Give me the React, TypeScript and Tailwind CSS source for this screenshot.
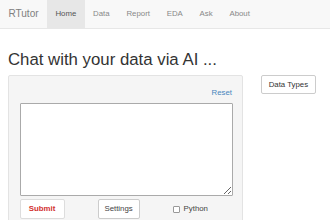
const tabs = ["Home", "Data", "Report", "EDA", "Ask", "About"];

export default function App() {
  return (
    <div className="w-[330px] h-[220px] overflow-hidden bg-white text-[#333] font-['Liberation_Sans',Arial,sans-serif]">
      {/* Navbar */}
      <nav className="flex h-[29px] bg-[#f8f8f8] border-b border-[#e7e7e7]">
        <div className="px-[8.4px] text-[10.08px] leading-[28px] text-[#808080]">RTutor</div>
        <ul className="flex">
          {tabs.map((t, i) => (
            <li
              key={t}
              className={`px-[8.4px] text-[7.84px] leading-[28px] ${
                i === 0 ? "bg-[#e7e7e7] text-[#555]" : "text-[#888]"
              }`}
            >
              {t}
            </li>
          ))}
        </ul>
      </nav>

      <div className="px-[8px]">
        <h2 className="mt-[22.4px] mb-[5.6px] text-[16.8px] leading-[18.5px] text-[#333]">
          Chat with your data via AI ...
        </h2>

        <div className="flex items-start">
          {/* Chat panel */}
          <div className="w-[235px] h-[200px] bg-[#f5f5f5] border border-[#e3e3e3] rounded-[2px] pl-[10.6px] pr-[9px] pt-[10.6px]">
            <div className="text-right text-[7.84px] leading-[11.2px] text-[#4a86bd] pr-[1px]">Reset</div>
            <textarea className="block mt-[5px] w-full h-[93px] bg-white border border-[#aaa] rounded-[1px] resize-y" />
            <div className="flex items-center mt-[3px]">
              <button className="h-[20px] w-[45px] bg-white border border-[#ddd] rounded-[2px] text-[7.84px] font-bold text-[#d2312f]">
                Submit
              </button>
              <button className="ml-[33px] h-[20px] w-[42px] bg-white border border-[#ccc] rounded-[2px] text-[7.84px] text-[#444]">
                Settings
              </button>
              <label className="ml-[33px] flex items-center gap-[4px] text-[7.84px] text-[#444]">
                <span className="w-[7px] h-[7px] border border-[#999] rounded-[1px] bg-white" />
                Python
              </label>
            </div>
          </div>

          {/* Right column */}
          <button className="ml-[18px] h-[19px] px-[6.7px] bg-white border border-[#ccc] rounded-[2px] text-[7.84px] leading-[11.2px] text-[#333]">
            Data Types
          </button>
        </div>
      </div>
    </div>
  );
}
